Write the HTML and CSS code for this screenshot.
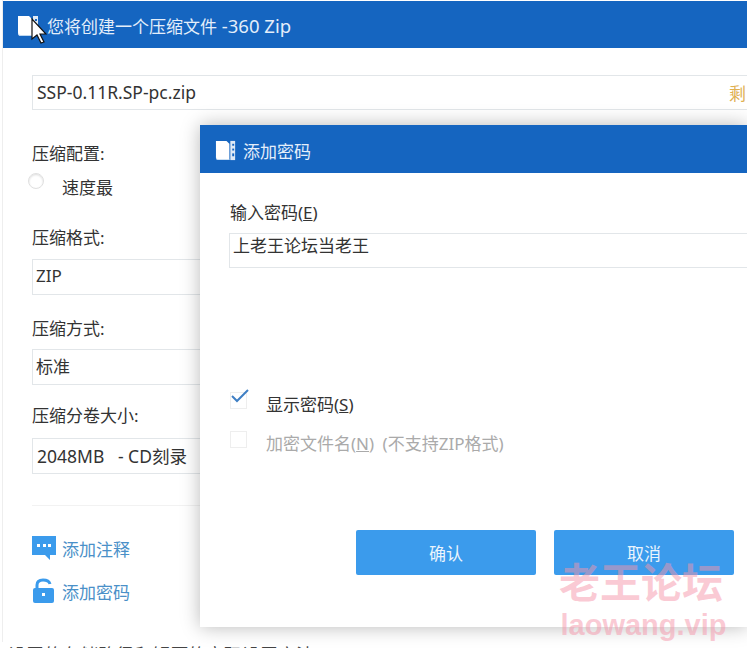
FILE: index.html
```html
<!DOCTYPE html>
<html lang="zh-CN">
<head>
    <meta charset="UTF-8">
    <title>添加密码 - 360 Zip</title>
    <link rel="stylesheet" href="styles.css">
</head>
<body>
    <div class="window">
        <header class="titlebar">
            <svg class="book" width="24" height="24" viewBox="0 0 24 24">
                <path d="M1 2h11l3 3v17H4q-3 0-3-3z" fill="#fff"/>
                <path d="M1 18q0 3 3 3h11v1H4q-3 0-3-3z" fill="#bcd6ef"/>
                <rect x="16" y="2" width="5" height="20" fill="#dfeaf6"/>
                <rect x="18" y="5" width="2" height="2" fill="#1565c0"/>
                <rect x="18" y="10" width="2" height="2" fill="#1565c0"/>
                <rect x="18" y="15" width="2" height="3" fill="#1565c0"/>
            </svg>
            <span class="title-text">您将创建一个压缩文件<span class="title-app"> -360 Zip</span></span>
        </header>
        <div class="content">
            <div class="namebox">
                <span class="filename">SSP-0.11R.SP-pc.zip</span>
                <span class="remain">剩</span>
            </div>
            <div class="label label-config">压缩配置:</div>
            <div class="speed">
                <span class="radio"></span>
                <span>速度最</span>
            </div>
            <div class="label label-format">压缩格式:</div>
            <div class="field">ZIP</div>
            <div class="label label-method">压缩方式:</div>
            <div class="field field-method">标准</div>
            <div class="label label-split">压缩分卷大小:</div>
            <div class="field field-split">2048MB &nbsp; - CD刻录</div>
            <div class="divider"></div>
            <a class="action action-note">
                <svg width="24" height="24" viewBox="0 0 24 24">
                    <path d="M0 0h24v19H18v5l-5-5H0z" fill="#3b9bec"/>
                    <rect x="5" y="8" width="3" height="3" fill="#fff"/>
                    <rect x="11" y="8" width="3" height="3" fill="#fff"/>
                    <rect x="16" y="8" width="3" height="3" fill="#fff"/>
                </svg>
                添加注释
            </a>
            <a class="action">
                <svg width="24" height="26" viewBox="0 0 24 26">
                    <path d="M5 11V7q0-5 6-5t7 4" fill="none" stroke="#3b9bec" stroke-width="3"/>
                    <rect x="1" y="10" width="21" height="15" rx="2" fill="#3b9bec"/>
                    <rect x="10" y="15" width="3" height="3" fill="#fff"/>
                </svg>
                添加密码
            </a>
        </div>
    </div>

    <div class="page-text">设置的存储路径和解压的密码设置方法</div>

    <svg class="cursor" width="16" height="26" viewBox="0 0 16 26">
        <path d="M1 1v20l5-4 4 8 3-1-4-8h6z" fill="#fff" stroke="#111" stroke-width="1.2"/>
    </svg>

    <section class="dialog">
        <header class="dialog-title">
            <svg class="book" width="23" height="23" viewBox="0 0 24 24">
                <path d="M1 2h11l3 3v17H4q-3 0-3-3z" fill="#fff"/>
                <path d="M1 18q0 3 3 3h11v1H4q-3 0-3-3z" fill="#bcd6ef"/>
                <rect x="16" y="2" width="5" height="20" fill="#dfeaf6"/>
                <rect x="18" y="5" width="2" height="2" fill="#1565c0"/>
                <rect x="18" y="10" width="2" height="2" fill="#1565c0"/>
                <rect x="18" y="15" width="2" height="3" fill="#1565c0"/>
            </svg>
            <span>添加密码</span>
        </header>
        <div class="dialog-body">
            <div class="label pw-label">输入密码(<u>E</u>)</div>
            <div class="pw-input">上老王论坛当老王</div>
            <div class="check check-show">
                <span class="box">
                    <svg width="20" height="16" viewBox="0 0 20 16">
                        <path d="M2 8l5 5L18 2" fill="none" stroke="#3f7fc4" stroke-width="2"/>
                    </svg>
                </span>
                <span>显示密码(<u>S</u>)</span>
            </div>
            <div class="check check-off">
                <span class="box"></span>
                <span class="check-note">加密文件名(<u>N</u>) (不支持ZIP格式)</span>
            </div>
            <div class="buttons">
                <button>确认</button>
                <button>取消</button>
            </div>
        </div>
    </section>

    <div class="watermark">
        <div class="wm-cn">老王论坛</div>
        <div class="wm-en">laowang.vip</div>
    </div>
</body>
</html>
```

FILE: styles.css
```css
html, body {
    margin: 0;
    padding: 0;
    width: 747px;
    height: 648px;
    overflow: hidden;
}
body {
    position: relative;
    background: #fff;
    color: #333;
    font-family: "Noto Sans", "Noto Sans CJK SC", sans-serif;
    font-size: 17px;
}
.window {
    margin-left: 2px;
    height: 642px;
    padding-top: 1px;
    background: #fff;
    box-sizing: border-box;
    border-left: 1px solid #eee;
    overflow: hidden;
}
.titlebar {
    display: flex;
    align-items: center;
    height: 47px;
    padding: 2px 0 0 14px;
    box-sizing: border-box;
    background: #1565c0;
    color: #e4eefa;
    font-size: 17px;
}
.title-text {
    margin-left: 6px;
}
.title-app {
    font-size: 18.5px;
}
.content {
    padding: 27px 0 0 29px;
}
.namebox {
    display: flex;
    justify-content: space-between;
    align-items: center;
    width: 721px;
    height: 35px;
    box-sizing: border-box;
    padding: 0 6px 1px 4px;
    border: 1px solid #e2e6e9;
}
.filename {
    font-size: 17.5px;
}
.remain {
    color: #e0b050;
}
.label {
    line-height: 20px;
}
.label-config { margin-top: 34px; }
.speed {
    display: flex;
    align-items: center;
    height: 24px;
    margin-top: 10px;
    margin-left: -4px;
}
.radio {
    width: 14px;
    height: 14px;
    margin-right: 18px;
    margin-bottom: 10px;
    border: 1px solid #e0e0e0;
    border-radius: 50%;
    box-shadow: inset 0 1px 2px #ddd;
}
.label-format { margin-top: 30px; }
.label-method { margin-top: 24px; }
.label-split { margin-top: 21px; }
.field {
    display: flex;
    align-items: center;
    width: 500px;
    height: 36px;
    margin-top: 11px;
    box-sizing: border-box;
    padding: 0 0 4px 3px;
    border: 1px solid #e2e6e9;
}
.field-method {
    margin-top: 10px;
}
.field-split {
    margin-top: 12px;
    padding: 0 0 2px 4px;
    font-size: 17.5px;
}
.divider {
    width: 500px;
    height: 1px;
    margin-top: 31px;
    background: #f2f2f2;
}
.action {
    display: flex;
    align-items: center;
    gap: 6px;
    height: 26px;
    margin-top: 17px;
    color: #4a90c8;
}
.action-note {
    margin-top: 29px;
}
.page-text {
    position: absolute;
    left: 8px;
    top: 641px;
    color: #444;
    font-size: 18px;
    white-space: nowrap;
}
.cursor {
    position: absolute;
    left: 31px;
    top: 18px;
}
.dialog {
    position: absolute;
    left: 200px;
    top: 125px;
    width: 547px;
    height: 502px;
    background: #fff;
    box-shadow: 0 0 18px rgba(0, 0, 0, 0.28);
}
.dialog-title {
    display: flex;
    align-items: center;
    gap: 5px;
    height: 48px;
    padding: 2px 0 0 15px;
    box-sizing: border-box;
    background: #1565c0;
    color: #e4eefa;
}
.dialog-body {
    padding: 30px 0 0 30px;
}
.pw-input {
    width: 530px;
    height: 35px;
    margin: 10px 0 0 -1px;
    box-sizing: border-box;
    padding: 1px 3px;
    border: 1px solid #e2e6e9;
    line-height: 22px;
}
.check {
    display: flex;
    align-items: center;
    gap: 19px;
    height: 20px;
    margin-left: -1px;
}
.check-show { margin-top: 125px; }
.check-off {
    margin-top: 19px;
    color: #aaa;
}
.check-note {
    word-spacing: 4px;
}
.box {
    position: relative;
    width: 15px;
    height: 15px;
    margin-left: 1px;
    margin-bottom: 6px;
    border: 1px solid #eee;
    flex: none;
}
.box svg {
    position: absolute;
    left: -1px;
    top: -5px;
}
.buttons {
    display: flex;
    gap: 18px;
    margin-top: 78px;
    margin-left: 126px;
}
button {
    width: 180px;
    height: 45px;
    border: none;
    border-radius: 2px;
    background: #3b9bec;
    color: #eaf4fd;
    font-family: inherit;
    font-size: 17px;
}
.watermark {
    position: absolute;
    left: 553px;
    top: 558px;
    width: 176px;
    text-align: center;
    color: rgba(245, 150, 170, 0.5);
    font-weight: bold;
}
.wm-cn {
    font-size: 41px;
    line-height: 48px;
}
.wm-en {
    margin: 3px 0 0 5px;
    font-size: 29px;
    line-height: 32px;
    white-space: nowrap;
    font-family: "Liberation Sans", sans-serif;
}
```
